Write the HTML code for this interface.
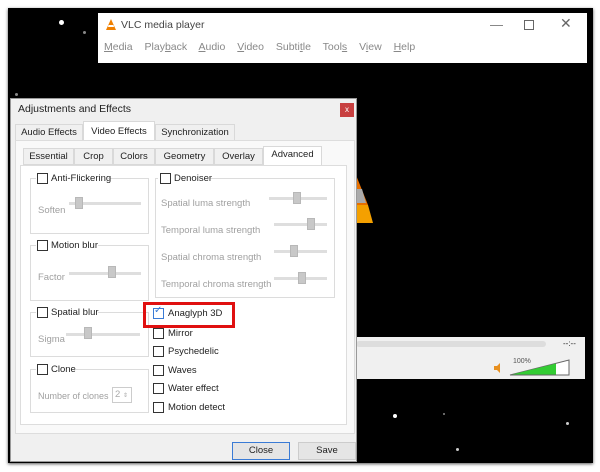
<!DOCTYPE html>
<html><head><meta charset="utf-8"><style>
*{margin:0;padding:0;box-sizing:border-box}
body{width:600px;height:472px;background:#fff;position:relative;overflow:hidden;font-family:"Liberation Sans",sans-serif;font-size:9.5px;color:#222}
.a{position:absolute}
.cb{position:absolute;width:11px;height:11px;border:1px solid #333;background:#fff}
.lbl{position:absolute;white-space:nowrap}
.g{color:#a0a0a0}
.grp{position:absolute;border:1px solid #dcdcdc}
.tab{position:absolute;height:17px;border:1px solid #d9d9d9;background:#f0f0f0;text-align:center;line-height:15px}
.trk{position:absolute;height:3px;background:#dedede}
.th{position:absolute;width:8px;height:12px;background:#c8c8c8;border:1px solid #b8b8b8}
.star{position:absolute;border-radius:50%;background:#ddd}
</style></head><body>
<div class="a" style="left:8px;top:8px;width:585px;height:455px;background:#000;box-shadow:0 1px 3px #555"></div>
<div class="star" style="left:59px;top:20px;width:5px;height:5px;background:#fff"></div>
<div class="star" style="left:83px;top:31px;width:3px;height:3px;background:#888"></div>
<div class="star" style="left:15px;top:93px;width:3px;height:3px;background:#888"></div>
<div class="star" style="left:393px;top:414px;width:4px;height:4px;background:#fff"></div>
<div class="star" style="left:456px;top:448px;width:3px;height:3px;background:#ccc"></div>
<div class="star" style="left:566px;top:422px;width:3px;height:3px;background:#ccc"></div>
<div class="star" style="left:443px;top:413px;width:2px;height:2px;background:#888"></div>
<!-- VLC window -->
<div class="a" style="left:98px;top:13px;width:489px;height:50px;background:#fff"></div>
<svg class="a" style="left:105px;top:18px" width="12" height="14"><path d="M6 1 L11 12 L1 12Z" fill="#f08000"/><path d="M3.5 7 L8.5 7 L9 9 L3 9Z" fill="#fff"/></svg>
<div class="lbl" style="left:121px;top:19px;font-size:10.5px;color:#444">VLC media player</div>
<div class="lbl" style="left:490px;top:17px;font-size:13px;color:#777">—</div>
<div class="a" style="left:524px;top:20px;width:10px;height:10px;border:1px solid #666"></div>
<div class="lbl" style="left:560px;top:15px;font-size:14px;color:#666">✕</div>
<div class="lbl" style="left:104px;top:41px;font-size:10.5px;color:#888;word-spacing:9px"><u>M</u>edia Play<u>b</u>ack <u>A</u>udio <u>V</u>ideo Subti<u>t</u>le Tool<u>s</u> V<u>i</u>ew <u>H</u>elp</div>
<svg class="a" style="left:356px;top:175px" width="36" height="72"><path d="M0 0 L12 30 L0 30Z" fill="#e87000"/><path d="M0 30 L12 30 L17 48 L0 48Z" fill="#f4a000"/><path d="M0 14 L6 14 L10 28 L0 28Z" fill="#aaa"/></svg>
<div class="a" style="left:356px;top:337px;width:229px;height:42px;background:#f0f0f0"></div>
<div class="a" style="left:356px;top:341px;width:190px;height:6px;background:#ddd;border-radius:3px"></div>
<div class="lbl" style="left:563px;top:339px;font-size:8px">--:--</div>
<div class="lbl" style="left:513px;top:358px;font-size:7px;color:#555">100%</div>
<svg class="a" style="left:492px;top:358px" width="80" height="20"><path d="M2 8h3l3-3v10l-3-3H2z" fill="#e89020"/><path d="M18 17 L77 2 L77 17Z" fill="#fff" stroke="#666"/><path d="M20 16.5 L64 5.5 L64 16.5Z" fill="#3c3"/></svg>
<!-- Dialog -->
<div class="a" style="left:10px;top:98px;width:347px;height:364px;background:#f0f0f0;border:1px solid #999"></div>
<div class="lbl" style="left:18px;top:103px;font-size:10.5px">Adjustments and Effects</div>
<div class="a" style="left:340px;top:103px;width:14px;height:14px;background:#c84040;color:#fff;font-size:8px;text-align:center;line-height:14px">x</div>
<div class="tab" style="left:15px;top:124px;width:68px">Audio Effects</div>
<div class="tab" style="left:83px;top:121px;width:72px;height:19px;background:#fff;border-bottom:none;line-height:19px">Video Effects</div>
<div class="tab" style="left:155px;top:124px;width:80px">Synchronization</div>
<div class="a" style="left:15px;top:140px;width:340px;height:294px;background:#f9f9f9;border:1px solid #ddd"></div>
<div class="tab" style="left:23px;top:148px;width:51px">Essential</div>
<div class="tab" style="left:74px;top:148px;width:39px">Crop</div>
<div class="tab" style="left:113px;top:148px;width:42px">Colors</div>
<div class="tab" style="left:155px;top:148px;width:59px">Geometry</div>
<div class="tab" style="left:214px;top:148px;width:49px">Overlay</div>
<div class="tab" style="left:263px;top:146px;width:59px;height:20px;background:#fff;border-bottom:none">Advanced</div>
<div class="a" style="left:20px;top:165px;width:327px;height:260px;background:#fff;border:1px solid #ddd"></div>
<!-- groups -->
<div class="grp" style="left:30px;top:178px;width:119px;height:56px"></div>
<div class="a" style="left:36px;top:172px;width:72px;height:12px;background:#fff"></div>
<div class="cb" style="left:37px;top:173px"></div><div class="lbl" style="left:51px;top:173px">Anti-Flickering</div>
<div class="lbl g" style="left:38px;top:205px">Soften</div>
<div class="trk" style="left:69px;top:202px;width:72px"></div><div class="th" style="left:75px;top:197px"></div>

<div class="grp" style="left:30px;top:245px;width:119px;height:56px"></div>
<div class="a" style="left:36px;top:239px;width:62px;height:12px;background:#fff"></div>
<div class="cb" style="left:37px;top:240px"></div><div class="lbl" style="left:51px;top:240px">Motion blur</div>
<div class="lbl g" style="left:38px;top:272px">Factor</div>
<div class="trk" style="left:69px;top:272px;width:72px"></div><div class="th" style="left:108px;top:266px"></div>

<div class="grp" style="left:30px;top:312px;width:119px;height:45px"></div>
<div class="a" style="left:36px;top:306px;width:62px;height:12px;background:#fff"></div>
<div class="cb" style="left:37px;top:307px"></div><div class="lbl" style="left:51px;top:307px">Spatial blur</div>
<div class="lbl g" style="left:38px;top:334px">Sigma</div>
<div class="trk" style="left:66px;top:333px;width:74px"></div><div class="th" style="left:84px;top:327px"></div>

<div class="grp" style="left:30px;top:369px;width:119px;height:44px"></div>
<div class="a" style="left:36px;top:363px;width:40px;height:12px;background:#fff"></div>
<div class="cb" style="left:37px;top:364px"></div><div class="lbl" style="left:51px;top:364px">Clone</div>
<div class="lbl g" style="left:38px;top:391px;font-size:9px">Number of clones</div>
<div class="a" style="left:112px;top:387px;width:20px;height:16px;border:1px solid #ccc;color:#aaa;padding-left:2px;line-height:14px">2 <span style="font-size:6px">⇕</span></div>

<div class="grp" style="left:155px;top:178px;width:180px;height:120px"></div>
<div class="a" style="left:158px;top:172px;width:52px;height:12px;background:#fff"></div>
<div class="cb" style="left:160px;top:173px"></div><div class="lbl" style="left:174px;top:173px">Denoiser</div>
<div class="lbl g" style="left:161px;top:198px">Spatial luma strength</div>
<div class="trk" style="left:269px;top:197px;width:58px"></div><div class="th" style="left:293px;top:192px"></div>
<div class="lbl g" style="left:161px;top:225px">Temporal luma strength</div>
<div class="trk" style="left:274px;top:223px;width:53px"></div><div class="th" style="left:307px;top:218px"></div>
<div class="lbl g" style="left:161px;top:252px">Spatial chroma strength</div>
<div class="trk" style="left:274px;top:250px;width:53px"></div><div class="th" style="left:290px;top:245px"></div>
<div class="lbl g" style="left:161px;top:279px">Temporal chroma strength</div>
<div class="trk" style="left:274px;top:277px;width:53px"></div><div class="th" style="left:298px;top:272px"></div>

<div class="a" style="left:143px;top:302px;width:92px;height:26px;border:3px solid #e01010"></div>
<div class="cb" style="left:153px;top:308px;border-color:#3a7bd5"></div><div class="lbl" style="left:154px;top:305px;color:#3a7bd5;font-size:10px">✓</div>
<div class="lbl" style="left:168px;top:308px">Anaglyph 3D</div>
<div class="cb" style="left:153px;top:328px"></div><div class="lbl" style="left:168px;top:328px">Mirror</div>
<div class="cb" style="left:153px;top:346px"></div><div class="lbl" style="left:168px;top:346px">Psychedelic</div>
<div class="cb" style="left:153px;top:365px"></div><div class="lbl" style="left:168px;top:365px">Waves</div>
<div class="cb" style="left:153px;top:383px"></div><div class="lbl" style="left:168px;top:383px">Water effect</div>
<div class="cb" style="left:153px;top:402px"></div><div class="lbl" style="left:168px;top:402px">Motion detect</div>

<div class="a" style="left:232px;top:442px;width:58px;height:18px;border:1px solid #3a7bd5;background:#e5e5e5;text-align:center;line-height:16px">Close</div>
<div class="a" style="left:298px;top:442px;width:58px;height:18px;border:1px solid #ccc;background:#e5e5e5;text-align:center;line-height:16px">Save</div>
</body></html>
